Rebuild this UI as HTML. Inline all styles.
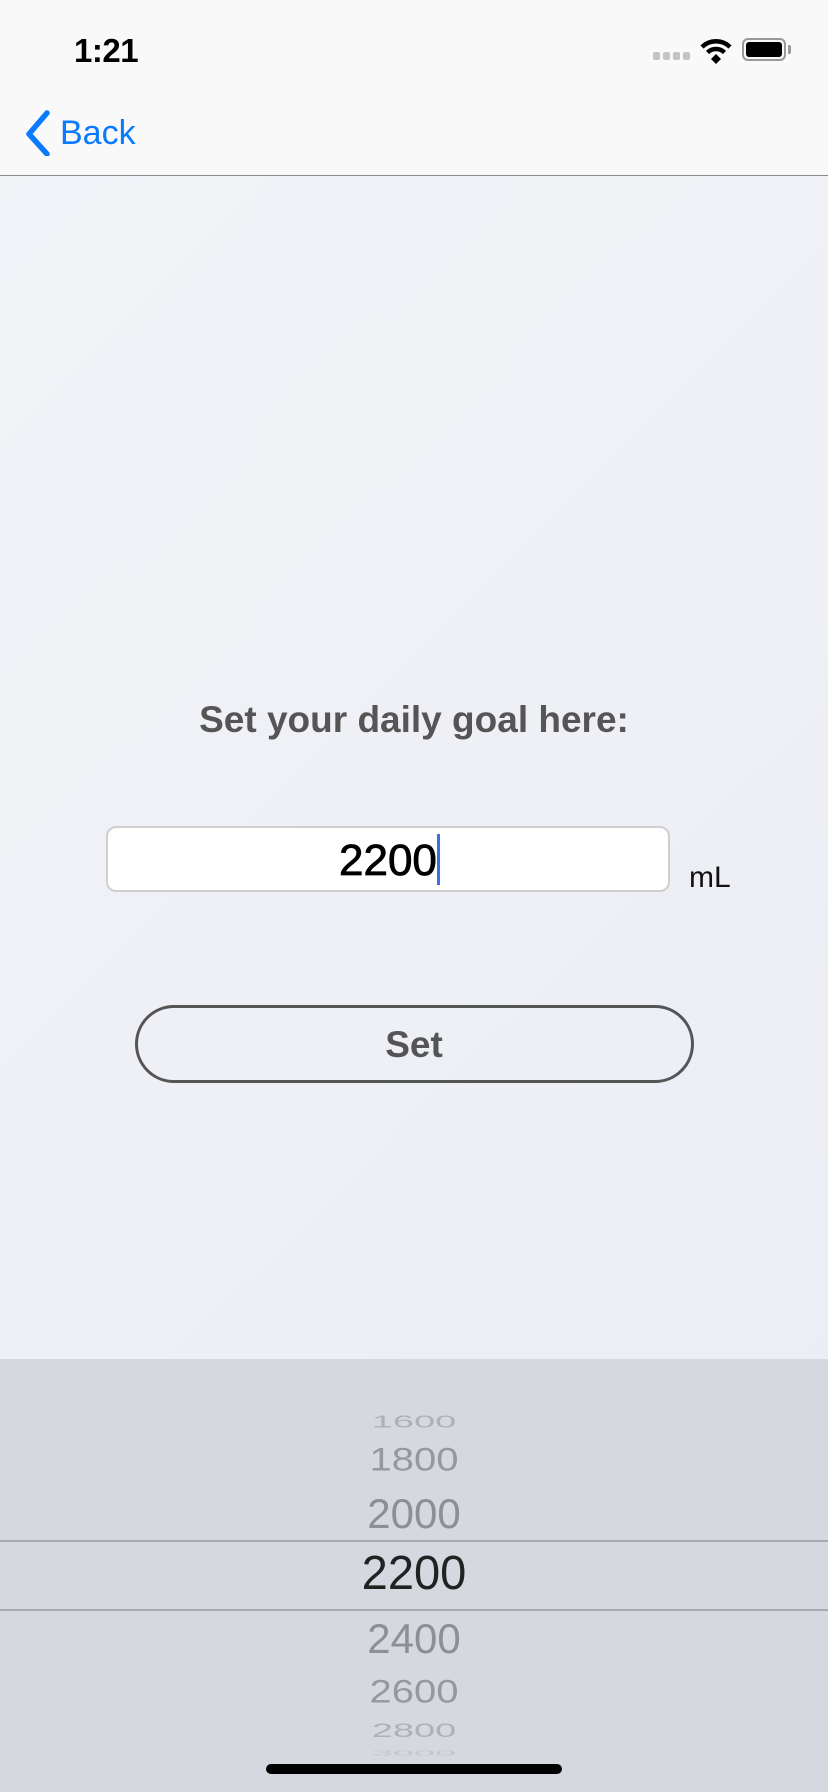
<!DOCTYPE html>
<html><head><meta charset="utf-8"><style>
*{margin:0;padding:0;box-sizing:border-box}
body{width:828px;height:1792px;overflow:hidden;font-family:"Liberation Sans",sans-serif;background:linear-gradient(135deg,#f3f4f8,#e9ecf3);position:relative}
.abs{position:absolute}
.nav{left:0;top:0;width:828px;height:176px;background:#f9f9fa;border-bottom:1.5px solid #8a8a8a}
.c{left:0;width:828px;text-align:center;line-height:1}
.pk{left:0;top:1359px;width:828px;height:433px;background:#d5d8df}
.row{position:absolute;left:0;width:828px;text-align:center;line-height:1;color:#8e8e93}
</style></head><body>
<div class="abs nav"></div>
<div class="abs" style="left:74px;top:32px;font-size:33px;font-weight:bold;letter-spacing:-0.5px;">1:21</div>
<div class="abs" style="left:653px;top:52px;display:flex;gap:3px">
<div style="width:7px;height:8px;background:#c4c4c4;border-radius:2px"></div><div style="width:7px;height:8px;background:#c4c4c4;border-radius:2px"></div><div style="width:7px;height:8px;background:#c4c4c4;border-radius:2px"></div><div style="width:7px;height:8px;background:#c4c4c4;border-radius:2px"></div></div>
<svg class="abs" style="left:700px;top:38px" width="32" height="26" viewBox="0 0 32 26"><path d="M2 9 A20 20 0 0 1 30 9" stroke="#000" stroke-width="4.5" fill="none"/><path d="M7.5 14.5 A12 12 0 0 1 24.5 14.5" stroke="#000" stroke-width="4.5" fill="none"/><path d="M11 21 L16 16 L21 21 L16 26Z" fill="#000"/></svg>
<div class="abs" style="left:742px;top:38px;width:44px;height:23px;border:2px solid #999;border-radius:6px;padding:2px"><div style="width:100%;height:100%;background:#000;border-radius:3px"></div></div>
<div class="abs" style="left:788px;top:45px;width:3px;height:9px;background:#999;border-radius:0 2px 2px 0"></div>
<svg class="abs" style="left:22px;top:108px" width="32" height="48" viewBox="0 0 32 48"><path d="M25 5 L7 26 L25 46" stroke="#0a7aff" stroke-width="5.5" fill="none" stroke-linecap="round" stroke-linejoin="round"/></svg>
<div class="abs" style="left:60px;top:114px;font-size:34px;color:#0a7aff;">Back</div>
<div class="abs c" style="top:701px;font-size:37px;font-weight:bold;color:#555">Set your daily goal here:</div>
<div class="abs" style="left:106px;top:826px;width:564px;height:66px;background:#fff;border:2px solid #cfcfcf;border-radius:10px"></div>
<div class="abs" style="left:339px;top:836px;font-size:44px;color:#000;-webkit-text-stroke:0.8px #000">2200</div>
<div class="abs" style="left:437px;top:834px;width:3px;height:51px;background:#3b6fe3"></div>
<div class="abs" style="left:689px;top:861px;font-size:30px;color:#111">mL</div>
<div class="abs" style="left:135px;top:1005px;width:559px;height:78px;border:3px solid #555;border-radius:39px/39px"></div>
<div class="abs c" style="top:1026px;font-size:37px;font-weight:bold;color:#555">Set</div>
<div class="abs pk"></div>
<div class="row" style="top:1403px;font-size:38px;color:#b0b1b6;transform:scaleY(0.45)">1600</div>
<div class="row" style="top:1440px;font-size:40px;color:#97979c;transform:scaleY(0.8)">1800</div>
<div class="row" style="top:1493px;font-size:42px;">2000</div>
<div class="abs" style="left:0;top:1540px;width:828px;height:1.5px;background:#a9a9ad"></div>
<div class="row" style="top:1550px;font-size:48px;color:#222;transform:scaleX(0.98)">2200</div>
<div class="abs" style="left:0;top:1609px;width:828px;height:1.5px;background:#a9a9ad"></div>
<div class="row" style="top:1618px;font-size:42px;">2400</div>
<div class="row" style="top:1672px;font-size:40px;color:#97979c;transform:scaleY(0.8)">2600</div>
<div class="row" style="top:1712px;font-size:38px;color:#b0b1b6;transform:scaleY(0.5)">2800</div>
<div class="row" style="top:1734px;font-size:38px;color:#c6c7cc;transform:scaleY(0.2)">3000</div>
<div class="abs" style="left:266px;top:1764px;width:296px;height:10px;background:#000;border-radius:5px"></div>
</body></html>
